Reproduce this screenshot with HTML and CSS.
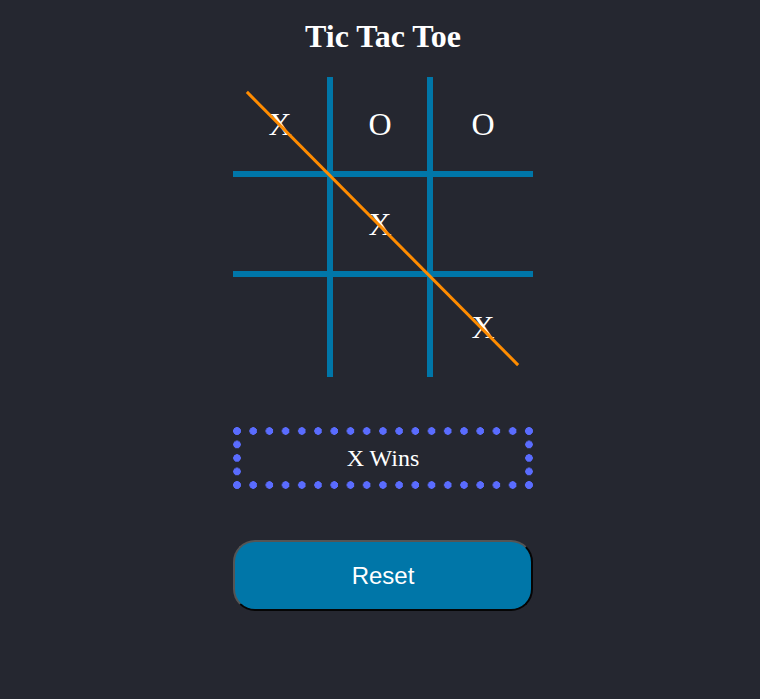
FILE: index.html
```html
<!DOCTYPE html>
<html>
<head>
<meta charset="utf-8">
<title>Tic Tac Toe</title>
<link rel="stylesheet" href="styles.css">
</head>
<body>
<main class="game">
  <h1 class="title">Tic Tac Toe</h1>
  <div class="board">
    <div class="cell c-r c-b">X</div>
    <div class="cell c-r c-b">O</div>
    <div class="cell c-b">O</div>
    <div class="cell c-r c-b"></div>
    <div class="cell c-r c-b">X</div>
    <div class="cell c-b"></div>
    <div class="cell c-r"></div>
    <div class="cell c-r"></div>
    <div class="cell">X</div>
    <div class="win-line"></div>
  </div>
  <div class="status">X Wins</div>
  <button class="reset">Reset</button>
</main>
</body>
</html>
```
FILE: styles.css
```css
html, body {
  margin: 0;
  padding: 0;
  background: #252730;
}
body {
  width: 760px;
  height: 699px;
  font-family: "Liberation Serif", "Times New Roman", serif;
  color: #ffffff;
}
.game {
  display: flex;
  flex-direction: column;
  align-items: center;
  padding-left: 6px;
}
.title {
  font-size: 32px;
  font-weight: bold;
  margin: 18px 0 22px;
  line-height: 37px;
}
.board {
  position: relative;
  display: grid;
  grid-template-columns: repeat(3, 100px);
  grid-template-rows: repeat(3, 100px);
  width: 300px;
  height: 300px;
}
.cell {
  box-sizing: border-box;
  display: flex;
  align-items: center;
  justify-content: center;
  font-size: 32px;
  color: #ffffff;
}
.c-r { border-right: 6px solid #0076a8; }
.c-b { border-bottom: 6px solid #0076a8; }
.win-line {
  position: absolute;
  left: -43px;
  top: 150px;
  width: 385px;
  height: 3px;
  background: #ff8c00;
  transform: rotate(45.2deg);
}
.status {
  --dot: radial-gradient(circle 4px at 4px 4px, #5a6cff 3.5px, rgba(90, 108, 255, 0) 4px);
  box-sizing: border-box;
  width: 300px;
  height: 62px;
  margin-top: 50px;
  border: 8px solid transparent;
  background-image: var(--dot), var(--dot), var(--dot), var(--dot);
  background-origin: border-box;
  background-clip: border-box;
  background-size: calc(292px / 18) 8px, calc(292px / 18) 8px, 8px 13.5px, 8px 13.5px;
  background-position: 0 0, 0 100%, 0 0, 100% 0;
  background-repeat: repeat-x, repeat-x, repeat-y, repeat-y;
  display: flex;
  align-items: center;
  justify-content: center;
  font-size: 24px;
}
.reset {
  box-sizing: border-box;
  width: 300px;
  height: 71px;
  margin-top: 51px;
  background: #0076a8;
  color: #ffffff;
  border-width: 2px;
  border-style: solid;
  border-color: #555555 #050505 #050505 #555555;
  border-radius: 22px;
  font-family: "Liberation Sans", Arial, sans-serif;
  font-size: 24px;
  padding: 0;
}
```
